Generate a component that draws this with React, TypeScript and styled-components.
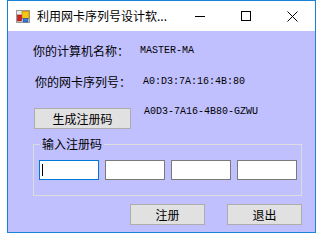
import React from "react";
import styled, { createGlobalStyle } from "styled-components";

const Global = createGlobalStyle`
  html, body { margin: 0; padding: 0; background: #ffffff; }
  body { font-family: "Noto Sans CJK SC", "Noto Sans", sans-serif; }
`;

const Page = styled.div`
  width: 323px;
  height: 240px;
  padding-left: 7px;
  box-sizing: border-box;
`;

const Window = styled.div`
  width: 309px;
  height: 233px;
  box-sizing: border-box;
  border: 1px solid #1883d7;
  display: flex;
  flex-direction: column;
`;

const TitleBar = styled.div`
  height: 30px;
  background: #ffffff;
  display: flex;
  align-items: center;
  flex-shrink: 0;
`;

const AppIcon = styled.svg`
  width: 14px;
  height: 13px;
  margin-left: 8px;
  flex-shrink: 0;
`;

const TitleText = styled.div`
  margin-left: 7px;
  font-size: 12px;
  line-height: 14px;
  color: #000;
  flex: 1;
  white-space: nowrap;
`;

const CaptionButton = styled.div`
  width: 46px;
  height: 30px;
  display: flex;
  align-items: center;
  justify-content: center;
`;

const Content = styled.div`
  flex: 1;
  background: #c0c0ff;
  display: flex;
  flex-direction: column;
  padding-left: 25px;
  padding-top: 12px;
  color: #000;
`;

const Row = styled.div<{ $indent?: number; $top?: number; $height?: number }>`
  display: flex;
  align-items: center;
  height: ${(p) => p.$height ?? 16}px;
  margin-top: ${(p) => p.$top ?? 0}px;
  padding-left: ${(p) => p.$indent ?? 0}px;
`;

const Label = styled.div<{ $width: number }>`
  width: ${(p) => p.$width}px;
  font-size: 12px;
  line-height: 14px;
  white-space: nowrap;
`;

const Value = styled.div<{ $shift?: number }>`
  font-family: "Liberation Mono", "DejaVu Sans Mono", monospace;
  font-size: 10px;
  line-height: 12px;
  white-space: nowrap;
  margin-top: ${(p) => p.$shift ?? 0}px;
`;

const ButtonRow = styled.div`
  display: flex;
  align-items: flex-start;
  height: 21px;
  margin-top: 18px;
  padding-left: 1px;
  gap: 13px;
`;

const WinButton = styled.div<{ $width: number }>`
  width: ${(p) => p.$width}px;
  height: 21px;
  box-sizing: border-box;
  background: #e1e1e1;
  border: 1px solid #adadad;
  display: flex;
  align-items: center;
  justify-content: center;
  font-size: 12px;
  line-height: 14px;
`;

const GroupBox = styled.div`
  position: relative;
  margin-top: 15px;
  width: 269px;
  height: 52px;
  box-sizing: border-box;
  border: 1px solid #dcdcdc;
  display: flex;
  gap: 6px;
  padding: 15px 0 0 5px;
`;

const Legend = styled.div`
  position: absolute;
  top: -8px;
  left: 6px;
  padding: 0 2px;
  background: #c0c0ff;
  font-size: 12px;
  line-height: 14px;
`;

const TextBox = styled.div<{ $focused?: boolean }>`
  width: 60px;
  height: 20px;
  box-sizing: border-box;
  background: #ffffff;
  border: 1px solid ${(p) => (p.$focused ? "#0078d7" : "#7a7a7a")};
  display: flex;
  align-items: center;
  padding-left: 2px;
`;

const Caret = styled.div`
  width: 1px;
  height: 12px;
  background: #000;
`;

const Actions = styled.div`
  display: flex;
  justify-content: flex-end;
  gap: 22px;
  margin-top: 8px;
  padding-right: 13px;
`;

export default function App() {
  return (
    <>
      <Global />
      <Page>
        <Window>
          <TitleBar>
            <AppIcon viewBox="0 0 14 13">
              <rect x="0.5" y="0.5" width="13" height="12" fill="#ececec" stroke="#9a9a9a" />
              <rect x="6" y="1.5" width="7" height="7" fill="#f5c518" stroke="#c98a00" strokeWidth="0.8" />
              <rect x="1.5" y="5" width="4" height="6" fill="#d42020" stroke="#8b1010" strokeWidth="0.6" />
              <rect x="7" y="8.5" width="5" height="3.5" fill="#3a7bd5" stroke="#1f4f9a" strokeWidth="0.6" />
            </AppIcon>
            <TitleText>利用网卡序列号设计软...</TitleText>
            <CaptionButton>
              <svg width="10" height="10" viewBox="0 0 10 10">
                <line x1="0" y1="5.5" x2="10" y2="5.5" stroke="#000" strokeWidth="1" />
              </svg>
            </CaptionButton>
            <CaptionButton>
              <svg width="10" height="10" viewBox="0 0 10 10">
                <rect x="0.5" y="0.5" width="9" height="9" fill="none" stroke="#000" strokeWidth="1" />
              </svg>
            </CaptionButton>
            <CaptionButton>
              <svg width="11" height="11" viewBox="0 0 11 11">
                <line x1="0.5" y1="0.5" x2="10.5" y2="10.5" stroke="#000" strokeWidth="1" />
                <line x1="10.5" y1="0.5" x2="0.5" y2="10.5" stroke="#000" strokeWidth="1" />
              </svg>
            </CaptionButton>
          </TitleBar>
          <Content>
            <Row>
              <Label $width={107}>你的计算机名称：</Label>
              <Value>MASTER-MA</Value>
            </Row>
            <Row $indent={2} $top={15}>
              <Label $width={108}>你的网卡序列号：</Label>
              <Value>A0:D3:7A:16:4B:80</Value>
            </Row>
            <ButtonRow>
              <WinButton $width={97}>生成注册码</WinButton>
              <Value $shift={-2}>A0D3-7A16-4B80-GZWU</Value>
            </ButtonRow>
            <GroupBox>
              <Legend>输入注册码</Legend>
              <TextBox $focused>
                <Caret />
              </TextBox>
              <TextBox />
              <TextBox />
              <TextBox />
            </GroupBox>
            <Actions>
              <WinButton $width={75}>注册</WinButton>
              <WinButton $width={75}>退出</WinButton>
            </Actions>
          </Content>
        </Window>
      </Page>
    </>
  );
}
